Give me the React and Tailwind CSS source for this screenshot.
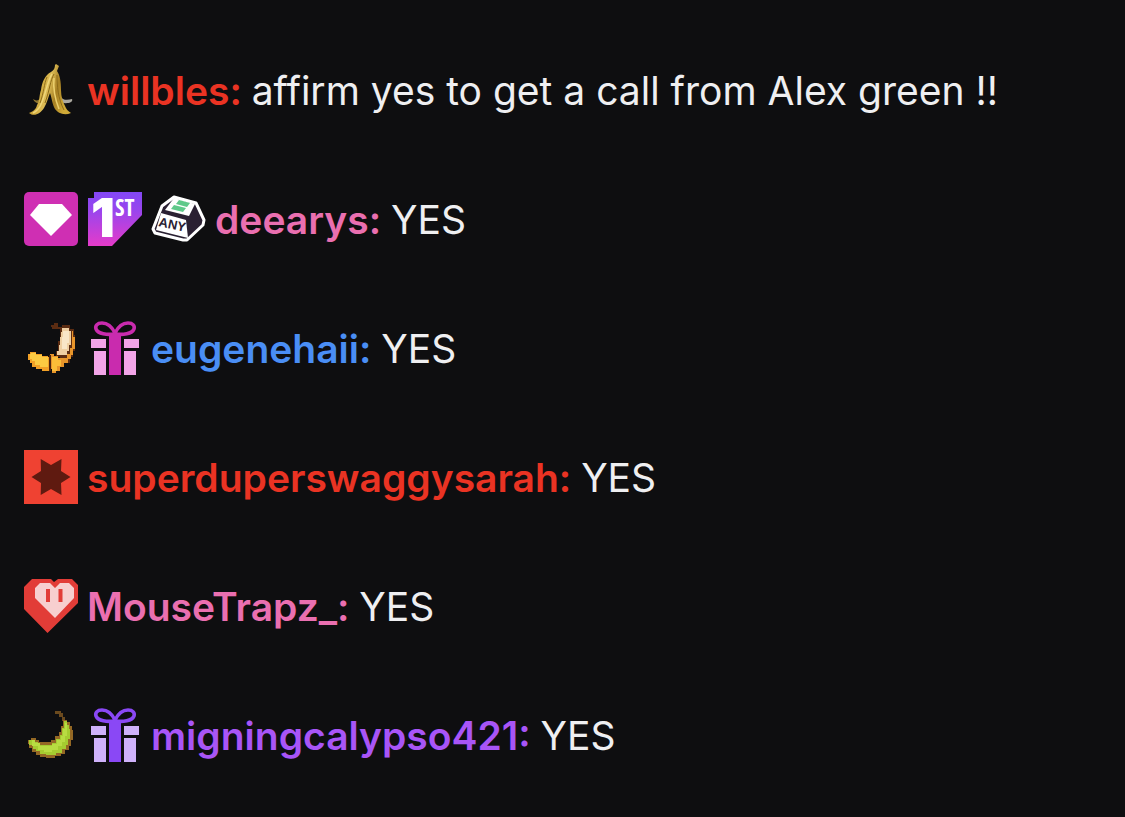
import React from 'react';

const badgeClass = 'block h-[54px] w-[54px] shrink-0 overflow-visible';

function GoldBanana() {
  return (
    <svg viewBox="0 0 54 54" className={badgeClass} role="img" aria-label="Golden banana">
      <defs>
        <linearGradient id="gold" x1="0" x2="1" y1="0" y2="0.3">
          <stop offset="0" stopColor="#8a6a1c" />
          <stop offset="0.35" stopColor="#cfa83a" />
          <stop offset="0.55" stopColor="#dcbb55" />
          <stop offset="0.75" stopColor="#a67f22" />
          <stop offset="1" stopColor="#d0aa38" />
        </linearGradient>
      </defs>
      <path d="M17 35C14 38 12 38 9 36C11 41 17 42 20 38Z" fill="#8d7430" />
      <path d="M36 33C39 38 44 37 48 36C49 38 47 40 43 40C40 41 37 39 36 37Z" fill="#aaa79f" />
      <path d="M32 1L35 3L33 8C36 12 37 19 37 27C37 34 39 39 41 43C42 46 44 48 47 50C40 53 34 50 31 46C28 41 28 35 26 30C24 35 23 40 20 45C16 51 10 54 5 50C10 48 12 46 13 42C16 38 15 32 17 27C18 19 21 12 27 9C30 7 31 5 31 2Z" fill="url(#gold)" />
      <path d="M28 11C24 17 22 29 18 39C16 45 13 48 9 50" fill="none" stroke="#efd67a" strokeWidth="1.5" />
      <path d="M30 11C26 18 26 26 21 40M33 12C33 22 34 36 40 47" fill="none" stroke="#8c6a18" strokeWidth="1" />
      <path d="M30 15C29 25 31 36 35 46" fill="none" stroke="#ecd06e" strokeWidth="1.5" />
      <path d="M23 14C20 21 20 29 16 40" fill="none" stroke="#92701d" strokeWidth="1" />
    </svg>
  );
}

function Diamond() {
  return (
    <svg viewBox="0 0 54 54" className={badgeClass} role="img" aria-label="Subscriber">
      <rect width="54" height="54" rx="5" fill="#cf2fb3" />
      <path d="M15 12H38L48 23L27 44L6 23Z" fill="#fff" />
    </svg>
  );
}

function First() {
  return (
    <svg viewBox="0 0 54 54" className={badgeClass}>
      <defs>
        <linearGradient id="first" x1="0" x2="0" y1="0" y2="1">
          <stop offset="0" stopColor="#8248f5" />
          <stop offset="0.35" stopColor="#9a45ed" />
          <stop offset="1" stopColor="#e53bc9" />
        </linearGradient>
      </defs>
      <path d="M0 6H6V0H54V23L24 54H0Z" fill="url(#first)" />
      <text x="3" y="45" fill="#fff" fontFamily="Inter, sans-serif" fontSize="53" fontWeight="900">1</text>
      <text x="27" y="24" fill="#fff" fontFamily="'Liberation Sans Narrow', 'Open Sans Condensed', Roboto, sans-serif" fontSize="23" fontWeight="700">ST</text>
    </svg>
  );
}

function AnyKey() {
  return (
    <svg viewBox="0 0 54 54" className={badgeClass}>
      <path d="M22 5L44 11L52 28L51 33L35 48L31 48L3 41L1 37L10 14Z" fill="#2a2032" stroke="#fff" strokeWidth="3" strokeLinejoin="round" />
      <path d="M22 6L43 12L37 24L13 18Z" fill="#fff" />
      <path d="M9 21L34 28L36 46L4 38Z" fill="#fff" />
      <path d="M27 8L38 11L35 15L24 12Z" fill="#5fc98a" />
      <path d="M22 13L34 16L31 20L19 17Z" fill="#5fc98a" />
      <text x="6" y="34" transform="rotate(12 6 34)" fill="#2a2032" fontFamily="'Liberation Sans', sans-serif" fontSize="13" fontWeight="700">ANY</text>
    </svg>
  );
}

function PeeledBanana() {
  return (
    <svg viewBox="0 0 54 54" className={badgeClass} shapeRendering="crispEdges" role="img" aria-label="Peeled banana">
      <path d="M27 4H30V2H34V6H38V4H46V8H50V14H51V30H49V36H46V42H40V46H36V36H32V30H34V20H36V8H28Z" fill="#5b2c12" />
      <path d="M38 7H45V10H47V24H45V30H43V34H33V30H35V24H36V16H37Z" fill="#efcfa2" />
      <path d="M39 10H45V22H43V28H38V16H39Z" fill="#f9e6c8" />
      <path d="M48 10H49V16H51V28H49V34H47V38H44V42H40V46H36V50H32V52H28V48H26V33H30V35H34V37H43V33H46V27H48Z" fill="#e8952a" />
      <path d="M28 36H34V39H37V45H33V50H28Z" fill="#fbbd38" />
      <path d="M6 31H12V33H18V35H24V36H26V50H18V48H12V46H8V42H6V39H4V33H6Z" fill="#f2a127" />
      <path d="M7 32H12V34H18V36H24V46H16V44H11V40H8V38H6V33Z" fill="#fccb42" />
      <path d="M25 34H27V50H25Z" fill="#4a2411" />
    </svg>
  );
}

function GreenBanana() {
  return (
    <svg viewBox="0 0 54 54" className={badgeClass} shapeRendering="crispEdges" role="img" aria-label="Green banana">
      <path d="M31 3H37V5H39V9H41V13H38V9H35V6H31Z" fill="#6b4a1e" />
      <path d="M39 12H43V14H46V18H48V22H49V32H47V38H45V42H41V46H37V48H31V50H22V49H16V47H12V44H8V40H5V36H4V32H7V30H12V32H15V34H27V32H31V28H35V24H37V18H39Z" fill="#946824" />
      <path d="M40 13H43V17H45V21H46V31H44V37H42V41H38V45H32V47H22V46H16V43H12V41H9V37H5V32H11V34H14V37H28V35H32V31H36V27H38V20H40Z" fill="#a5cc30" />
      <path d="M41 15H43V28H41V34H38V38H34V42H28V44H20V42H14V38H8V32H11V35H16V38H28V36H33V32H37V28H39V21H41Z" fill="#b8dc42" />
    </svg>
  );
}

function Gift({ ribbon, box }) {
  return (
    <svg viewBox="0 0 54 54" className={badgeClass} role="img" aria-label="Gift subs">
      <path d="M3 18H18V27H3ZM36 18H51V27H36ZM6 30H18V54H6ZM36 30H48V54H36Z" fill={box} />
      <path d="M21 13H33V54H21Z" fill={ribbon} />
      <path d="M27 12C24 6 19 2 14 2C9 2 7 5 8 8C10 13 19 14 27 13C35 14 44 13 46 8C47 5 45 2 40 2C35 2 30 6 27 12Z" fill="none" stroke={ribbon} strokeWidth="3.6" strokeLinejoin="round" />
    </svg>
  );
}

function Star() {
  return (
    <svg viewBox="0 0 54 54" className={badgeClass} role="img" aria-label="Star">
      <rect width="54" height="54" fill="#ef4232" />
      <path d="M16.7 9L27 15L37.5 9L37 21L46.5 27L37 33L37.5 45L27 39L16.7 45L17 33L7.5 27L17 21Z" fill="#5f1a10" />
    </svg>
  );
}

function Heart() {
  return (
    <svg viewBox="0 0 54 54" className={badgeClass} role="img" aria-label="Heart">
      <path d="M8 0H27L30 3L34 0H48L54 6V24L23.5 54L0 30V8Z" fill="#e23c37" />
      <path d="M16 4H26L31 9L36 4H45L50 9V19L31 39L11 19V9Z" fill="#f7cfcf" />
      <path d="M22 10H26V23H22ZM34.5 10H38.5V23H34.5Z" fill="#e23c37" />
    </svg>
  );
}

const messages = [
  { user: 'willbles', color: 'text-[#ea3323]', text: 'affirm yes to get a call from Alex green !!', badges: [<GoldBanana key="b" />] },
  { user: 'deearys', color: 'text-[#ea6fb0]', text: 'YES', badges: [<Diamond key="d" />, <First key="f" />, <AnyKey key="a" />] },
  { user: 'eugenehaii', color: 'text-[#4a8ef5]', text: 'YES', badges: [<PeeledBanana key="p" />, <Gift key="g" ribbon="#c92bae" box="#f2a5e8" />] },
  { user: 'superduperswaggysarah', color: 'text-[#ea3323]', text: 'YES', badges: [<Star key="s" />] },
  { user: 'MouseTrapz_', color: 'text-[#ea6fb0]', text: 'YES', badges: [<Heart key="h" />] },
  { user: 'migningcalypso421', color: 'text-[#a855f7]', text: 'YES', badges: [<GreenBanana key="n" />, <Gift key="g" ribbon="#8a48f5" box="#cfb2fb" />] },
];

export default function App() {
  return (
    <main className="min-h-screen bg-[#0e0e10] px-6 pt-[63px] pb-12 font-['Inter',sans-serif] text-[39px] leading-[56px] text-[#efeff1]">
      <ul className="flex flex-col gap-[73px]">
        {messages.map((m) => (
          <li key={m.user} className="flex items-start gap-[9px]">
            <div className="flex shrink-0 gap-[10px]">{m.badges}</div>
            <p className="min-w-0">
              <span className={`font-semibold ${m.color}`}>{m.user}: </span>
              {m.text}
            </p>
          </li>
        ))}
      </ul>
    </main>
  );
}
